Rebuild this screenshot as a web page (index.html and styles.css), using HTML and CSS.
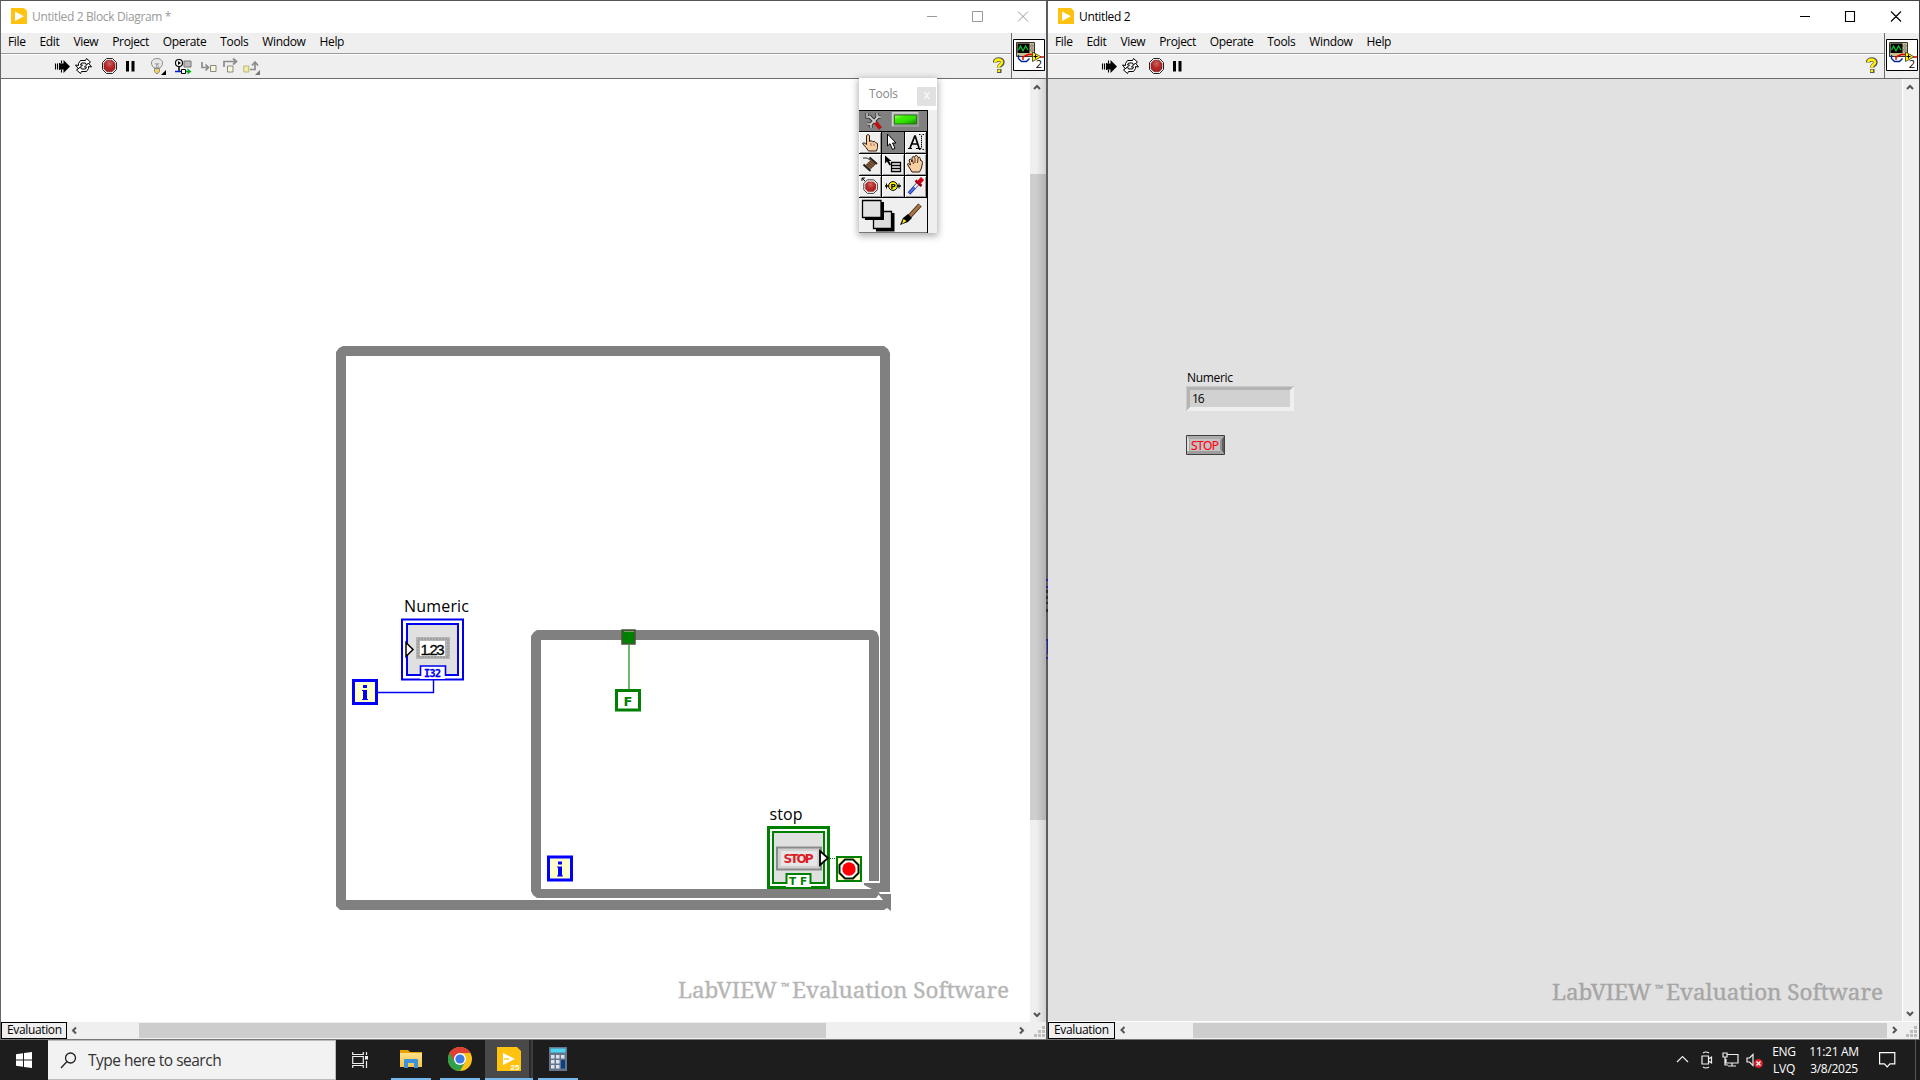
FILE: index.html
```html
<!DOCTYPE html>
<html lang="en">
<head>
<meta charset="utf-8">
<title>Untitled 2</title>
<link rel="stylesheet" href="styles.css">
</head>
<body>
<svg class="defs" width="0" height="0" aria-hidden="true">
  <defs>
    <radialGradient id="red" cx=".5" cy=".3" r=".7"><stop offset="0" stop-color="#c96a6a"/><stop offset=".5" stop-color="#b82b2b"/><stop offset="1" stop-color="#a02222"/></radialGradient>
    <linearGradient id="led" x1="0" y1="0" x2="1" y2="1"><stop offset="0" stop-color="#b8ff90"/><stop offset=".3" stop-color="#3cf000"/><stop offset=".6" stop-color="#2fe000"/><stop offset="1" stop-color="#158000"/></linearGradient>
    <linearGradient id="folder" x1="0" y1="0" x2="0" y2="1"><stop offset="0" stop-color="#ffe08a"/><stop offset="1" stop-color="#f8c544"/></linearGradient>
    <symbol id="logo" viewBox="0 0 16 16"><path d="M0 0h13l3 3v13H0z" fill="#ffc20e"/><path d="M4 3.600 13 8.300 4 13z" fill="#fff"/></symbol>
    <symbol id="run" viewBox="0 0 18 18"><path d="M1.500 6.500v6M3.500 6.500v6M5.500 6v7M7.500 3.500v3M7.500 12.500v3" stroke="#000" stroke-width="1.100"/><path d="M5 6.500h4.500V3L16 9.500 9.500 16v-3.500H5z"/></symbol>
    <symbol id="cont" viewBox="0 0 18 18"><g fill="#fff" stroke="#000" stroke-width="1"><path d="M3.500 8.500v-2l2-3h5l1-2 4 3.500-4 3-1-2h-4l-1 2h2l-4 4-3-4z"/><path d="M13.500 9.500v2l-2 3h-5l-1 2-4-3.500 4-3 1 2h4l1-2h-2l4-4 3 4z"/></g></symbol>
    <symbol id="abort" viewBox="0 0 18 18"><path d="M5.500 1.500h6l4 4v7l-4 4h-6l-4-4v-7z" fill="#fff" stroke="#222"/><path d="M6 3.200h5L14 6.200v5.600l-3 3H6l-3-3V6.200z" fill="url(#red)" stroke="#7c1818" stroke-width=".6"/></symbol>
    <symbol id="pause" viewBox="0 0 18 18"><path d="M4 4h3v10.500H4zM9.500 4h3v10.500h-3z"/></symbol>
    <symbol id="help" viewBox="0 0 12 17"><path d="M2 5.500C2 1.500 9.500 1.500 9.500 5.200 9.500 8 6 8 6 10.500" fill="none" stroke="#555" stroke-width="4.500"/><path d="M4 12h4.500v4H4z" fill="#555"/><path d="M2.200 5.300C2.200 1.800 9 1.800 9 5.200 9 7.700 5.600 8 5.600 10.500" fill="none" stroke="#ffef00" stroke-width="2.600"/><path d="M4.600 12.600h2.500v2.400H4.600z" fill="#ffef00"/></symbol>
    <symbol id="vi" viewBox="0 0 32 32"><path d="M.5.500h31v31H.5z" fill="#fff" stroke="#000"/><path d="M3.500 3.500h18v14h-18z" fill="#c8bd8c" stroke="#333"/><path d="M4.500 4.500h12v9.500h-12z" fill="#000"/><path d="M5.500 11l2-4 2.500 5 2.500-5 2.500 4" fill="none" stroke="#00d030" stroke-width="1.200"/><circle cx="18.900" cy="7" r="1.200" fill="#eee" stroke="#555" stroke-width=".8"/><circle cx="18.900" cy="11" r="1.200" fill="#eee" stroke="#555" stroke-width=".8"/><path d="M5.500 16v3.500l3 3h5l3-3" fill="none" stroke="#00269c" stroke-width="1.400"/><path d="M10 21v-3l5-2.500h5M27 18h4" fill="none" stroke="#e00000" stroke-width="1.400"/><path d="M19.500 13v9.500l8.500-4.700z" fill="#fff000" stroke="#333" stroke-width=".8"/><path d="M20.500 17.500h4M22.500 15.500v4" stroke="#000"/></symbol>
  </defs>
</svg>

<main class="desktop">
  <section class="window diagram-window">
    <header class="titlebar inactive">
      <svg class="logo"><use href="#logo"/></svg><h1>Untitled 2 Block Diagram *</h1>
      <svg class="controls" width="102" height="12" viewBox="0 0 102 12"><path d="M0 5.500h10M45.500.500h10v10h-10zM91 .5l10 10M101 .5l-10 10" fill="none" stroke="currentColor"/></svg>
    </header>
    <div class="bars">
      <div class="bar-stack">
        <nav class="menu"><span>File</span><span>Edit</span><span>View</span><span>Project</span><span>Operate</span><span>Tools</span><span>Window</span><span>Help</span></nav>
        <div class="toolbar">
          <svg><use href="#run"/></svg><svg class="g3"><use href="#cont"/></svg><svg class="g8"><use href="#abort"/></svg><svg class="g3"><use href="#pause"/></svg>
          <svg class="g10" viewBox="0 0 18 18"><path d="M4 11C-1 6 2 1.500 7 1.500S15 6 10 11z" fill="#e8e8e8" stroke="#8a8a8a"/><path d="M5 6l1.500 2L7 6l.8 2L9 6M6.500 8v3M8 8v3" fill="none" stroke="#999" stroke-width=".8"/><path d="M4.500 11.500h5v3l-1.500 2H6l-1.500-2z" fill="#f0d060" stroke="#777" stroke-width=".8"/><path d="M16 13v5h-5z"/></svg>
          <svg class="g6" viewBox="0 0 18 18"><circle cx="5" cy="6" r="3.500" fill="#fff" stroke="#000" stroke-width="1.200"/><path d="M4 4l3 2-3 2z"/><path d="M10 4h7v6h-7z" fill="#bbb" stroke="#777"/><path d="M5 9.500v5" stroke="#000" stroke-width="1.500"/><path d="M1 14.500h6" stroke="#0020e0" stroke-width="1.500"/><path d="M7.500 12.500h4v4h-4z" fill="#fff" stroke="#000"/><path d="M12 14.500h3" stroke="#00a000" stroke-width="1.500"/><path d="M13.500 11.500l4 3-4 3z" fill="#00b020"/></svg>
          <svg class="g8" viewBox="0 0 18 18"><path d="M2 5v5.500h6M5.500 7.500l3 3-3 3" fill="none" stroke="#8c8c8c" stroke-width="1.700"/><path d="M10.500 8.500h5.500v6h-5.500z" fill="#fafad2" stroke="#888"/></svg>
          <svg class="g4" viewBox="0 0 18 18"><path d="M2 10V4.500h12M11 1.500l3.500 3-3.500 3" fill="none" stroke="#8c8c8c" stroke-width="1.700"/><path d="M5.500 9h5.500v6H5.500z" fill="#fafad2" stroke="#888"/></svg>
          <svg class="g3" viewBox="0 0 18 18"><path d="M.8 9h5v6h-5z" fill="#f2eda5" stroke="#bbb47c"/><path d="M7 12.500h5V6M9 8.500l3-3.500 3 3.500" fill="none" stroke="#8c8c8c" stroke-width="1.700"/><path d="M17 13v5h-5z" fill="#777"/></svg>
          <svg class="help"><use href="#help"/></svg>
        </div>
      </div>
      <div class="vi-cell"><svg><use href="#vi"/></svg><b>2</b></div>
    </div>
    <div class="work">
      <svg class="canvas" viewBox="1 79 1029 943" width="1029" height="943">
        <g fill="#808080">
          <path d="M343 346H884l4 3 2 4V892H880V356H346V900H883l-5-6h13v17l-4-3-3 2H340l-4-4V352l3-4z"/>
          <path d="M537 630h336l4 2 2 5V881H869V640H541V889H872L864 885V883H881V892H878L880 893 876 898H537l-4-3-2-4V636l3-4z"/>
        </g>
        <text class="node-label" x="404" y="612" textLength="65">Numeric</text>
        <path d="M402 619.500h61v60h-61z" fill="#fff" stroke="#0000f0" stroke-width="2"/>
        <path d="M407 624h51v51h-51z" fill="#e0e0e0" stroke="#0000f0" stroke-width="2"/>
        <path d="M416 637h34v22h-34z" fill="#b5b5b5"/><path d="M418 639h30v18h-30z" fill="none" stroke="#8a8a8a" stroke-dasharray="2 1"/><path d="M420 641h25v15h-25z" fill="#fff"/>
        <text class="num" x="420.500" y="654.500" textLength="24">1.23</text>
        <path d="M406 642.500v14l7-7z" fill="#fff" stroke="#000" stroke-width="1.500"/>
        <path d="M420 679v-13h25v13z" fill="#fff"/><path d="M420.500 676v-10h25v10" fill="none" stroke="#0000f0" stroke-width="1.600"/>
        <text class="type blue" x="424" y="677" textLength="17">I32</text>
        <path d="M433.500 680v12.500h-56" fill="none" stroke="#0000f0" stroke-width="1.400"/>
        <g id="iter"><path d="M353.500 680.500h23v23h-23z" fill="#ffffcc" stroke="#0000ff" stroke-width="3"/><path d="M363 685h4v3h-4zM362 690h5v9h1v1h-6v-1h1v-8h-1z" fill="#0000ff"/></g>
        <use href="#iter" x="195" y="176.500"/>
        <path d="M629 645v44" stroke="#6fb86f" stroke-width="2"/>
        <path d="M622 630h13v14h-13z" fill="#008000" stroke="#4d4d3d" stroke-width="1.500"/><path d="M624 631.500h10" stroke="#7a9a70"/>
        <path d="M616.500 690.500h23v19.500h-23z" fill="#fff" stroke="#008000" stroke-width="3"/>
        <text class="type bool" x="623.500" y="705.500">F</text>
        <text class="node-label" x="769.500" y="820" textLength="33">stop</text>
        <path d="M768.500 827.500h60v60h-60z" fill="#fff" stroke="#008000" stroke-width="3"/>
        <path d="M773 832h51v51h-51z" fill="#e0e0e0" stroke="#008000" stroke-width="2"/>
        <path d="M777 847.500h44v22h-44z" fill="#d0d0d0" stroke="#8a8a8a" stroke-width="2"/><path d="M781 851h36v15h-36z" fill="#e6e6e6"/>
        <text class="stop-text" x="783.500" y="862.500" textLength="30">STOP</text>
        <path d="M820 851v14l8-7z" fill="#fff" stroke="#000" stroke-width="1.800"/>
        <path d="M786 887v-13h25v13z" fill="#fff"/><path d="M786.500 884v-10h24v10" fill="none" stroke="#008000" stroke-width="2"/>
        <text class="type bool tf" x="789" y="884.500">T</text><text class="type bool tf" x="800" y="884.500">F</text>
        <path d="M830 858.500h6" stroke="#008000" stroke-dasharray="1 1"/>
        <path d="M837 857h24v24h-24z" fill="#ffffcc" stroke="#008000" stroke-width="2"/>
        <path d="M845 859.500h8l5.500 5.500v8l-5.500 5.500h-8l-5.500-5.500v-8z" fill="#fff" stroke="#001800" stroke-width="2"/><circle cx="849" cy="869" r="6.700" fill="#f00"/>
        <g class="watermark"><text x="678" y="998" textLength="99">LabVIEW</text><text class="tm" x="781" y="990" textLength="9">™</text><text x="792" y="998" textLength="217">Evaluation Software</text></g>
      </svg>
      <div class="vscroll">
        <svg viewBox="0 0 16 16"><path d="M4 10l3-3 3 3" class="chev"/></svg>
        <div class="vtrack"><i></i></div>
        <svg viewBox="0 0 16 16"><path d="M4 7l3 3 3-3" class="chev"/></svg>
      </div>
    </div>
    <footer class="hbar"><span class="tag">Evaluation</span>
      <svg viewBox="0 0 16 16"><path d="M9 5.500l-3 3 3 3" class="chev"/></svg>
      <div class="htrack"><i></i></div>
      <svg viewBox="0 0 16 16"><path d="M6 5.500l3 3-3 3" class="chev"/></svg>
      <svg viewBox="0 0 16 16"><path class="grip" d="M4 12h3v3H4zM8 12h3v3H8zM12 12h3v3h-3zM8 8h3v3H8zM12 8h3v3h-3zM12 4h3v3h-3z"/></svg>
    </footer>

    <aside class="palette">
      <header><span>Tools</span><b>x</b></header>
      <div class="palette-body">
        <div class="auto">
          <svg width="18" height="18" viewBox="0 0 18 18"><path d="M4 4l8 8M14 4L5 13" stroke="#222" stroke-width="3.800"/><path d="M2 1v4h4M12 1v4h4M2 12h4v4" fill="none" stroke="#333" stroke-width="3.200"/><path d="M4 4l8 8M14 4L5 13" stroke="#ccc" stroke-width="2"/><path d="M2 1v4h4M12 1v4h4M2 12h4v4" fill="none" stroke="#c4c4c4" stroke-width="1.600"/><path d="M10.500 10.500l5 6" stroke="#c01010" stroke-width="4"/></svg>
          <svg width="31" height="17" viewBox="0 0 31 17"><path d="M0 0h31v17H0z" fill="#9a9a9a"/><path d="M1 16V1h29" fill="none" stroke="#d0d0d0" stroke-width="2"/><path d="M3 3.500h25v10H3z" fill="url(#led)" stroke="#207010"/></svg>
        </div>
        <div class="tool"><svg viewBox="0 0 20 20"><path d="M6.500 11V3.500q1.500-2 3 0v6l1.500-.8 1.700 1 1.800-.3 1.200 1.300 1.800.8v4L16.500 19H8.500l-2.500-3.500-3.500-4q1-2 4 1z" fill="#f8cfa2" stroke="#2b1a0a"/><path d="M11 11v3M14 11.500v2.500" stroke="#8a5a30" stroke-width=".8"/></svg></div>
        <div class="tool on"><svg viewBox="0 0 20 20"><path d="M4.500 2v12l2.500-2.300 2.500 5.800 2.500-1.300-2.500-5.200H13z" fill="#fff" stroke="#000"/></svg></div>
        <div class="tool"><svg viewBox="0 0 20 20"><path d="M9 3.500L4 16M9 3.500L13 16M5.500 12h6" fill="none" stroke="#000" stroke-width="1.700"/><path d="M2 16.500h4M10 16.500h5" stroke="#000"/><path d="M13 2.500h2M16.500 2.500h2M15.500 3.500v13M13 17.500h2M16.500 17.500h2" stroke="#000" stroke-dasharray="1.500 .6"/></svg></div>
        <div class="tool"><svg viewBox="0 0 20 20"><path d="M3 4h4l3 2" fill="none" stroke="#333"/><path d="M5 11.500l6-6 5 4.500-6 6z" fill="#8a6040"/><path d="M7 10l5 4M8.500 8.500l5 4M10 7l5 4" stroke="#4a2e1c"/><path d="M9.500 3.500l7.500 6.500M3.500 10.500l7 6.500" stroke="#222" stroke-width="2"/></svg></div>
        <div class="tool"><svg viewBox="0 0 20 20"><path d="M2 1.500v8l2-2 2.500 4 1.500-1L6 7h2.500z"/><path d="M8.500 8.500h9v9h-9zM8.500 11.500h9M8.500 14.500h9" fill="#fff" stroke="#000" stroke-width="1.300"/></svg></div>
        <div class="tool"><svg viewBox="0 0 20 20"><path d="M6 18L1.500 10.500q0-2 3 .5L3 6q1-2 2.500 0L6 8 6 3.500q1-2 2.500 0L9 2q2-1.500 2.500.5l.5 1q2-1 2.300 1l.2 2q2 0 2 2l-1 5.500-2 4z" fill="#f8cfa2" stroke="#2b1a0a"/><path d="M6.500 6l1 4M9 4v5M12 4l-.5 5" stroke="#5a351a"/></svg></div>
        <div class="tool"><svg viewBox="0 0 20 20"><path d="M2 2h3M2 2v3M2 2l3 3" stroke="#000"/><g transform="translate(2.500 2.500) scale(.9)"><path d="M5.500 1.500h7l4 4v7l-4 4h-7l-4-4v-7z" fill="#fff" stroke="#222"/><path d="M6 3.200h6L15 6.200v5.600l-3 3H6l-3-3V6.200z" fill="url(#red)"/></g></svg></div>
        <div class="tool"><svg viewBox="0 0 20 20"><path d="M2 10h16" stroke="#000" stroke-width="1.500"/><path d="M3.500 7.500v5M16 7.500v5" stroke="#000"/><circle cx="10" cy="10" r="4.400" fill="#fff200" stroke="#000"/><text class="probe" x="7.500" y="12.700">P</text></svg></div>
        <div class="tool"><svg viewBox="0 0 20 20"><path d="M3 17.500L12 7.500" stroke="#27378c" stroke-width="3.400"/><path d="M8.500 11.500l4-4.500" stroke="#f4f4f4" stroke-width="2.200"/><path d="M3.500 17l5-5.500" stroke="#4a78ff" stroke-width="1.800"/><path d="M9.500 4.500l6 5.500" stroke="#900010" stroke-width="2.600"/><path d="M12.500 7l4-4.500" stroke="#d00018" stroke-width="4.200"/></svg></div>
        <div class="colors"><svg width="69" height="34" viewBox="0 0 69 34"><path d="M17 15h18.500v18.500H17z"/><path d="M14.500 13.500h18v17h-18z" fill="#ddd" stroke="#000" stroke-width="1.300"/><path d="M6 4h19v18H6z"/><path d="M3.500 2.500h18.500v17H3.500z" fill="#e2e2e2" stroke="#000" stroke-width="1.300"/><path d="M50 19L61 7" stroke="#4b2d16" stroke-width="4.600"/><path d="M50 19L61 7" stroke="#a87748" stroke-width="2.600"/><path d="M41 27l3-7 5-4 4 4-4 4z" fill="#000"/><path d="M43 26l1.500-5 3 2z" fill="#ffe800"/></svg></div>
      </div>
    </aside>
  </section>

  <section class="window panel-window">
    <svg class="edge" width="2" height="82" viewBox="0 0 2 82"><path d="M0 0h2v2H0zM0 7h2v2H0zM0 60h2v2H0zM0 78h2v2H0zM1 62h1v13H1z" fill="#24249c"/><path d="M0 11h2v3H0zM0 17h2v3H0zM0 23h2v2H0zM0 30h2v3H0z" fill="#2c2c2c"/></svg>
    <header class="titlebar">
      <svg class="logo"><use href="#logo"/></svg><h1>Untitled 2</h1>
      <svg class="controls" width="102" height="12" viewBox="0 0 102 12"><path d="M0 5.500h10M45.500.500h9v10h-9zM91 .5l10 10M101 .5l-10 10" fill="none" stroke="currentColor" stroke-width="1.100"/></svg>
    </header>
    <div class="bars">
      <div class="bar-stack">
        <nav class="menu"><span>File</span><span>Edit</span><span>View</span><span>Project</span><span>Operate</span><span>Tools</span><span>Window</span><span>Help</span></nav>
        <div class="toolbar"><svg><use href="#run"/></svg><svg class="g3"><use href="#cont"/></svg><svg class="g8"><use href="#abort"/></svg><svg class="g3"><use href="#pause"/></svg><svg class="help"><use href="#help"/></svg></div>
      </div>
      <div class="vi-cell"><svg><use href="#vi"/></svg><b>2</b></div>
    </div>
    <div class="work">
      <svg class="canvas" viewBox="1048 79 854 942" width="854" height="942">
        <text class="front-label" x="1187" y="382" textLength="46">Numeric</text>
        <path d="M1186 386h108v25h-108z" fill="#ccc"/><path d="M1186 411l4-4h100v-17l4-4v25z" fill="#efefef"/><path d="M1186 386h108l-4 4h-100v17l-4 4z" fill="#b4b4b4"/><path d="M1186 386.500h108M1186.500 386v25" stroke="#cacaca"/><path d="M1190 390h100v17h-100z" fill="#d1d1d1"/>
        <text class="front-label" x="1192" y="402.500" textLength="12.500">16</text>
        <path d="M1186.500 435.500h38v19h-38z" fill="#c3c3c3" stroke="#404040"/><path d="M1187 436h37l-3 3h-31v12l-3 3z" fill="#ababab"/><path d="M1189 439v12h-2v-15z" fill="#ddd"/><path d="M1224 436v18l-2-3v-12z" fill="#5e5e5e"/><path d="M1222 438v14l-2-2v-10z" fill="#929292"/><path d="M1187 454l3-3h30l4 3z" fill="#9d9d9d"/>
        <text class="front-label red" x="1191" y="450" textLength="28">STOP</text>
        <g class="watermark dim"><text x="1552" y="1000" textLength="99">LabVIEW</text><text class="tm" x="1655" y="992" textLength="9">™</text><text x="1666" y="1000" textLength="217">Evaluation Software</text></g>
      </svg>
      <div class="vscroll">
        <svg viewBox="0 0 16 16"><path d="M4 10l3-3 3 3" class="chev"/></svg>
        <div class="vtrack"></div>
        <svg viewBox="0 0 16 16"><path d="M4 7l3 3 3-3" class="chev"/></svg>
      </div>
    </div>
    <footer class="hbar"><span class="tag">Evaluation</span>
      <svg viewBox="0 0 16 16"><path d="M9.500 5l-3 3 3 3" class="chev"/></svg>
      <div class="htrack"><i></i></div>
      <svg viewBox="0 0 16 16"><path d="M6 5l3 3-3 3" class="chev"/></svg>
      <svg viewBox="0 0 16 16"><path class="grip" d="M3 12h3v3H3zM7 12h3v3H7zM11 12h3v3h-3zM7 8h3v3H7zM11 8h3v3h-3zM11 4h3v3h-3z"/></svg>
    </footer>
  </section>
</main>

<footer class="taskbar">
  <div class="start"><svg width="16" height="16" viewBox="0 0 16 16"><path d="M0 2.200l7-1v6.300H0zM8 1.100L16 0v7.500H8zM0 8.500h7v6.300l-7-1zM8 8.500h8V16l-8-1.100z" fill="#fff"/></svg></div>
  <div class="search"><svg width="17" height="17" viewBox="0 0 17 17"><circle cx="10.500" cy="6" r="5" fill="none" stroke="#222" stroke-width="1.300"/><path d="M7 9.500L1 16" stroke="#222" stroke-width="1.300"/></svg><span>Type here to search</span></div>
  <div class="task view"><svg width="18" height="16" viewBox="0 0 18 16"><path d="M1.700 0v2.500h10.600V0M1.700 4.500h10.600v7H1.700zM1.700 16v-2.500h10.600V16M15.500 0v3M15.500 9v7" fill="none" stroke="#eee" stroke-width="1.200"/><path d="M14 4h3v3.500h-3z" fill="#eee"/></svg></div>
  <div class="task open explorer"><svg width="22" height="20" viewBox="0 0 22 20"><path d="M0 1h8l2 2h12v5H0z" fill="#e8a400"/><path d="M0 4h22v14H0z" fill="url(#folder)"/><path d="M4 19v-8q0-1 1-1h12q1 0 1 1v8h-4v-5H8v5z" fill="#3c92dc"/></svg></div>
  <div class="task open chrome"><svg width="24" height="24" viewBox="0 0 24 24"><circle cx="12" cy="12" r="12" fill="#fbc116"/><path d="M12 12L1.600 6A12 12 0 0 0 12 24l5.200-9z" fill="#30a04a"/><path d="M1.600 6A12 12 0 0 1 22.400 6H12l-5.200 9z" fill="#df4035"/><circle cx="12" cy="12" r="6" fill="#fff"/><circle cx="12" cy="12" r="4.600" fill="#3a7be8"/></svg></div>
  <div class="task open active"><svg width="24" height="24" viewBox="0 0 24 24"><path d="M0 0h20l4 4v20H0z" fill="#ffc20e"/><path d="M6 6l12 6-12 6z" fill="#fff"/><path d="M7 12h5" stroke="#ffc20e" stroke-width="1.300"/><text class="year" x="13.500" y="22.500">25</text></svg></div>
  <div class="task open calc"><svg width="18" height="24" viewBox="0 0 18 24"><path d="M0 0h18v24H0z" fill="#65758a"/><path d="M1.500 1.500h15v4h-15z" fill="#4cd4f4"/><path d="M2 8h3.500v3.500H2zM7 8h3.500v3.500H7zM12 8h3.500v3.500H12zM2 13h3.500v3.500H2zM7 13h3.500v3.500H7zM2 18h3.500v3.500H2zM7 18h3.500v3.500H7z" fill="#dce2ea"/><path d="M12 13h4v8.500h-4z" fill="#0b3f86"/></svg></div>
  <div class="tray">
    <svg width="90" height="20" viewBox="0 0 90 20"><g fill="none" stroke="#eee" stroke-width="1.200"><path d="M1 12l5.500-5.500L12 12"/><path d="M26 6h6.500v8H26zM32.500 9l3-2v6l-3-2M27 3q3-2 6 0M27 17q3 2 6 0"/><path d="M51 4.500h11v8.500H50v-4M56 13v3M52 16h8M47 3h4v4h-4zM49 7v8h3"/><path d="M71 8h2.500L77 4.500v11L73.500 12H71z"/></g><circle cx="82.500" cy="13.500" r="4.500" fill="#d8202c"/><path d="M80.500 11.500l4 4M84.500 11.500l-4 4" stroke="#fff" stroke-width="1.300"/></svg>
    <div class="lang">ENG<br>LVQ</div>
    <div class="clock">11:21 AM<br>3/8/2025</div>
    <svg width="17" height="16" viewBox="0 0 17 16"><path d="M.6.600h15.200v11.300H11l-2.800 3-2.800-3H.6z" fill="none" stroke="#fff" stroke-width="1.200"/></svg>
  </div>
</footer>
</body>
</html>
```
FILE: styles.css
```css
* { box-sizing: border-box; }
body {
  margin: 0;
  width: 1920px;
  height: 1080px;
  overflow: hidden;
  display: flex;
  flex-direction: column;
  font: 12px "Open Sans", "Noto Sans", sans-serif;
  color: #000;
}
svg { display: block; flex: none; }
.defs { position: absolute; }
.desktop { display: flex; height: 1040px; }

.window {
  position: relative;
  display: flex;
  flex-direction: column;
  border-top: 1px solid #555;
  border-bottom: 1px solid #777;
  background: #efefef;
}
.diagram-window { width: 1046px; border-left: 1px solid #666; }
.panel-window { width: 874px; border-left: 2px solid #5c5c5c; border-right: 1px solid #444; border-top-color: #444; }
.edge { position: absolute; left: -2px; top: 578px; }

.titlebar {
  display: flex;
  align-items: center;
  height: 32px;
  padding: 0 17px 2px 10px;
  background: #fff;
}
.titlebar .logo { width: 16px; height: 16px; margin-right: 5px; }
.titlebar h1 { margin: 0; font-size: 12px; font-weight: 400; letter-spacing: -.36px; }
.titlebar.inactive { color: #999; }
.controls { margin-left: auto; margin-top: 2px; }

.bars { display: flex; height: 46px; border-bottom: 1px solid #6b6b6b; }
.bar-stack { flex: 1; }
.menu {
  display: flex;
  gap: 14px;
  height: 21px;
  padding-left: 7px;
  line-height: 18px;
  letter-spacing: -.36px;
  border-bottom: 1px solid #999;
}
.toolbar {
  display: flex;
  height: 24px;
  padding: 2px 6px 0 53px;
  border-top: 1px solid #fff;
}
.toolbar svg { width: 18px; height: 18px; }
.toolbar .g3 { margin-left: 3px; }
.toolbar .g4 { margin-left: 4px; }
.toolbar .g6 { margin-left: 6px; }
.toolbar .g8 { margin-left: 8px; }
.toolbar .g10 { margin-left: 10px; }
.toolbar .help { width: 12px; height: 17px; margin-left: auto; }
.vi-cell { position: relative; width: 35px; padding: 6px 0 0 1px; border-left: 1px solid #6b6b6b; }
.vi-cell svg { width: 32px; height: 32px; }
.vi-cell b { position: absolute; right: 4px; top: 23px; font-size: 11px; line-height: 16px; font-weight: 400; }

.work { display: flex; height: 943px; }
.diagram-window .canvas { background: #fff; }
.panel-window .work { background: #e1e1e1; height: 942px; }
.vscroll { display: flex; flex-direction: column; width: 16px; background: #efefef; }
.diagram-window .vscroll { background: linear-gradient(90deg, #efefef 40%, #d2d2d2); }
.panel-window .vscroll { width: 17px; border-left: 1px solid #fff; }
.vscroll svg, .hbar svg { width: 16px; height: 16px; }
.vtrack { flex: 1; padding-top: 79px; }
.vtrack i { display: block; height: 646px; background: linear-gradient(90deg, #cdcdcd 40%, #b2b2b2); }
.chev { fill: none; stroke: #555; stroke-width: 2; }
.grip { fill: #bdbdbd; }

.hbar { display: flex; height: 17px; }
.panel-window .hbar { height: 18px; border-top: 1px solid #fff; }
.tag {
  width: 67px;
  height: 17px;
  border: 1px solid #000;
  line-height: 14px;
  padding-left: 5px;
  letter-spacing: -.36px;
  white-space: nowrap;
}
.diagram-window .tag { width: 66px; padding-left: 5px; }
.htrack { flex: 1; height: 15px; margin-top: 1px; }
.htrack i { display: block; height: 15px; background: #cdcdcd; }
.diagram-window .htrack i { width: 687px; margin-left: 56px; }
.panel-window .htrack { margin-right: 2px; }
.panel-window .htrack + svg { margin-left: -2px; }
.panel-window .htrack i { margin-left: 62px; }

.canvas text { font-family: "Open Sans", sans-serif; }
.canvas .node-label { font-size: 16px; }
.canvas .num { font: 15px "Liberation Sans", sans-serif; stroke: #000; stroke-width: .3px; }
.canvas .type { font: bold 10px "DejaVu Sans Mono", monospace; }
.canvas .blue { fill: #0000f0; stroke: #0000f0; stroke-width: .3px; }
.canvas .bool { font-family: "DejaVu Sans", sans-serif; font-size: 13px; fill: #008000; }
.canvas .tf { font-size: 10.500px; }
.canvas .stop-text { font: bold 12px "DejaVu Sans", sans-serif; fill: #dc1e28; }
.canvas .front-label { font-size: 12px; }
.canvas .red { fill: #ff0010; stroke: #ff0010; stroke-width: .2px; }
.canvas .watermark text {
  font: 22.500px "Noto Serif", "Droid Serif", "DejaVu Serif", serif;
  fill: #b6b6b6;
  stroke: #b6b6b6;
  stroke-width: .35px;
}
.canvas .watermark .tm { font-size: 10px; }
.canvas .watermark.dim text { fill: #a6a6a6; stroke: #a6a6a6; }

.palette {
  position: absolute;
  left: 858px;
  top: 77px;
  width: 78px;
  height: 155px;
  background: #efefef;
  box-shadow: 0 2px 7px 1px rgba(0, 0, 0, .32);
}
.palette header { display: flex; height: 32px; padding: 9px 1px 0 10px; background: #fff; color: #888; line-height: 14px; letter-spacing: -.2px; }
.palette header b { width: 19px; height: 19px; margin-left: auto; background: #e1e1e1; color: #fff; font-weight: 400; line-height: 16px; text-align: center; }
.palette-body {
  display: grid;
  grid-template: 22px 22px 22px 22px 35px / 23px 23px 22px;
  width: 69px;
  border-right: 1px solid #000;
  height: 123px;
}
.auto { grid-column: 1 / 4; display: flex; gap: 7px; padding: 1px 0 0 6px; background: #808080; border: solid #000; border-width: 1px 0 1px; }
.auto svg:last-child { height: 15px; }
.tool { border-right: 1px solid #000; border-bottom: 1px solid #000; box-shadow: inset 1px 1px #fff, inset -1px -1px #999; padding: 0 1px; }
.tool svg { width: 20px; height: 20px; }
.tool.on { background: #808080; box-shadow: none; }
.colors { grid-column: 1 / 4; border-bottom: 1px solid #777; overflow: hidden; }
.probe { font: bold 7px "DejaVu Sans", sans-serif; }

.taskbar { display: flex; height: 40px; background: #1d1d1d; color: #fff; }
.start { width: 48px; padding: 12px 16px; }
.search {
  display: flex;
  align-items: center;
  gap: 11px;
  width: 288px;
  padding-left: 12px;
  margin-right: 2px;
  background: #f2f2f2;
  border: 1px solid #bbb;
  border-left: 0;
  color: #333;
  font-size: 15px;
  letter-spacing: -.5px;
}
.search span { font-size: 15.500px; }
.task { display: flex; align-items: center; justify-content: center; width: 40px; height: 40px; margin-right: 9px; }
.task.view { width: 44px; }
.task.open { border-bottom: 2px solid #76b9ed; }
.task.chrome { margin-right: 5px; }
.task.active { width: 48px; margin-right: 5px; background: linear-gradient(90deg, #494949 44px, #2a2a2a 44px, #2a2a2a 46px, #3d3d3d 46px); padding-right: 1px; }
.year { font: bold 8px "Liberation Sans", sans-serif; fill: #fff; }
.tray { display: flex; margin-left: auto; margin-right: 4px; padding-right: 19px; border-right: 1px solid #555; width: 240px; }
.tray > svg:first-child { margin-top: 10px; }
.tray > svg:last-child { margin: 12px 0 0 auto; }
.lang { width: 36px; text-align: center; line-height: 17px; padding-top: 3px; letter-spacing: -.3px; }
.clock { width: 64px; text-align: center; line-height: 17px; padding-top: 3px; letter-spacing: -.3px; white-space: nowrap; }
```
